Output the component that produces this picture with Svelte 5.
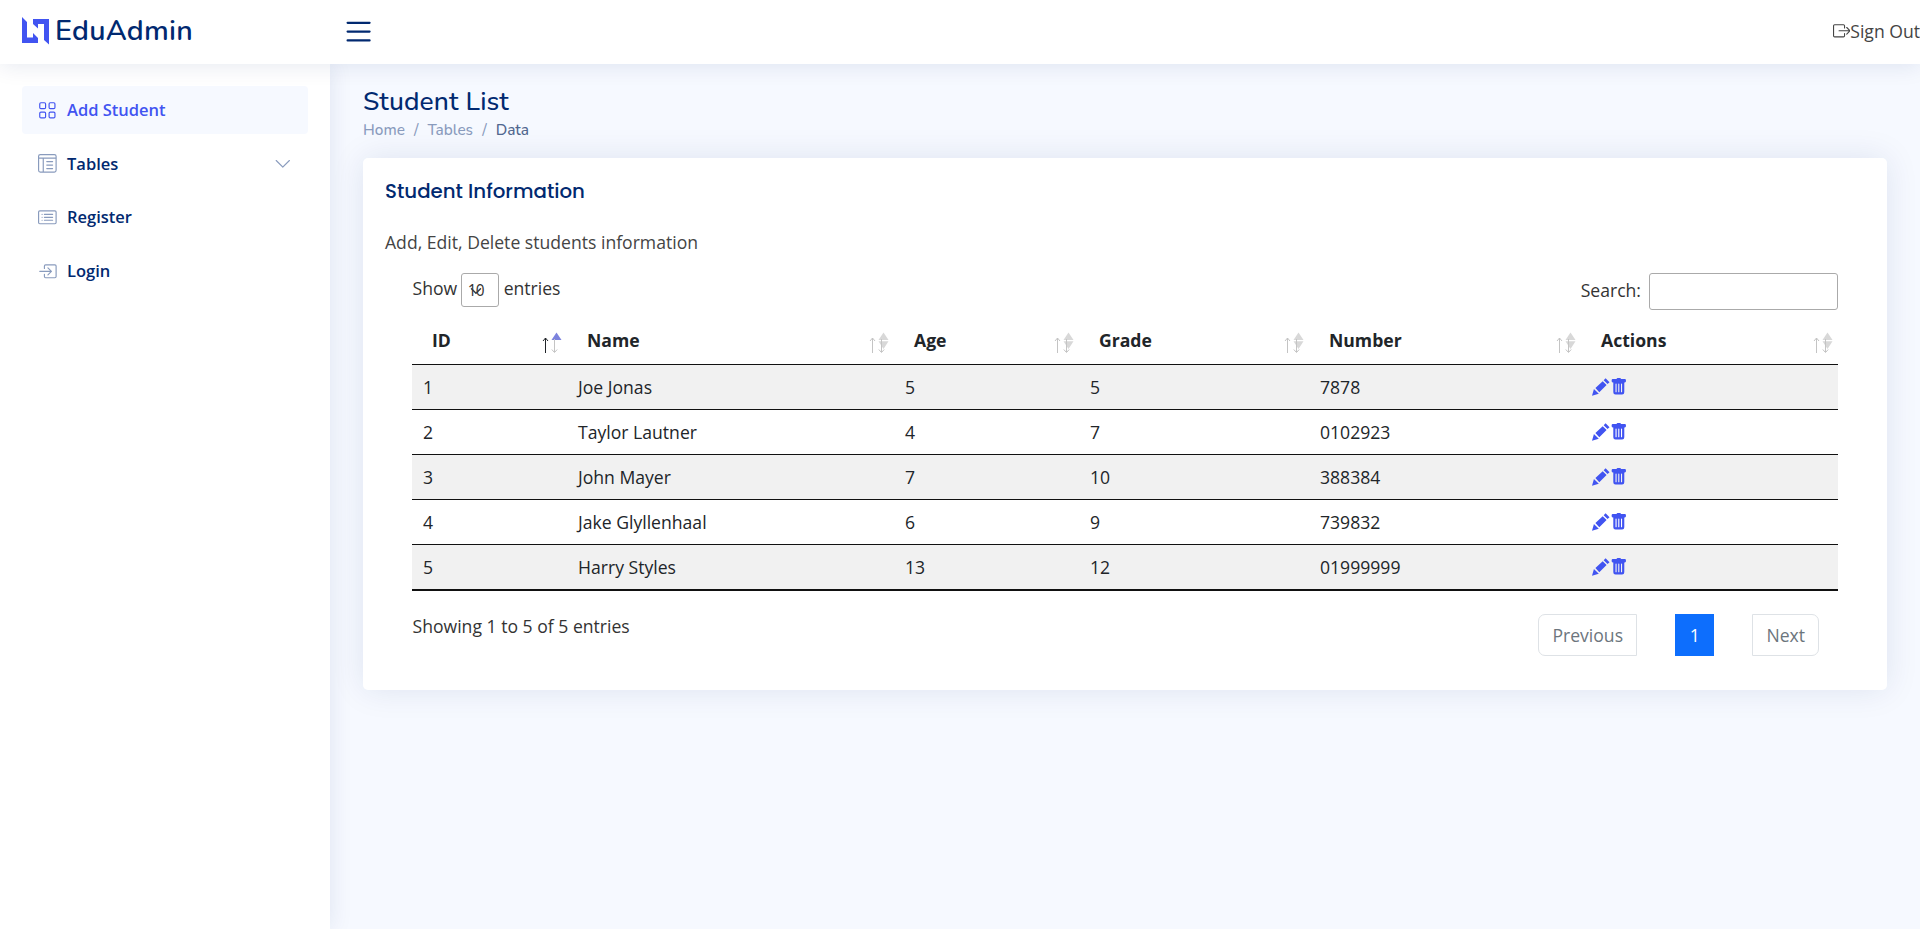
<script>
  const rows = [
    ['1', 'Joe Jonas', '5', '5', '7878'],
    ['2', 'Taylor Lautner', '4', '7', '0102923'],
    ['3', 'John Mayer', '7', '10', '388384'],
    ['4', 'Jake Glyllenhaal', '6', '9', '739832'],
    ['5', 'Harry Styles', '13', '12', '01999999']
  ];
  const columns = ['ID', 'Name', 'Age', 'Grade', 'Number', 'Actions'];
  const widths = [155, 327, 185, 230, 272, 257];
</script>

<header>
  <div class="brand">
    <svg class="logo" width="28" height="28" viewBox="0 0 28 28">
      <path d="M0 0 L5 5 V20.500 H11 L11 16 L16 21 V26 H0Z M27 27.500 L22 23 V7 H16 V11.500 L11 7 V2 H27Z" fill="#4154f1" />
    </svg>
    <span>EduAdmin</span>
  </div>
  <svg class="burger" width="35.2" height="35.2" viewBox="0 0 16 16" fill="#012970"><path fill-rule="evenodd" d="M2.500 12a.5.5 0 0 1 .5-.5h10a.5.5 0 0 1 0 1H3a.5.5 0 0 1-.5-.5zm0-4a.5.5 0 0 1 .5-.5h10a.5.5 0 0 1 0 1H3a.5.5 0 0 1-.5-.5zm0-4a.5.5 0 0 1 .5-.5h10a.5.5 0 0 1 0 1H3a.5.5 0 0 1-.5-.5z" /></svg>
  <a class="signout" href="#out">
    <svg width="17.6" height="17.6" viewBox="0 0 16 16" fill="currentColor"><path fill-rule="evenodd" d="M10 12.500a.5.5 0 0 1-.5.5h-8a.5.5 0 0 1-.5-.5v-9a.5.5 0 0 1 .5-.5h8a.5.5 0 0 1 .5.5v2a.5.5 0 0 0 1 0v-2A1.500 1.500 0 0 0 9.500 2h-8A1.500 1.500 0 0 0 0 3.500v9A1.500 1.500 0 0 0 1.500 14h8a1.500 1.500 0 0 0 1.500-1.500v-2a.5.5 0 0 0-1 0v2z" /><path fill-rule="evenodd" d="M15.854 8.354a.5.5 0 0 0 0-.708l-3-3a.5.5 0 0 0-.708.708L14.293 7.500H5.500a.5.5 0 0 0 0 1h8.793l-2.147 2.146a.5.5 0 0 0 .708.708l3-3z" /></svg><span>Sign Out</span>
  </a>
</header>

<div class="body">
  <aside>
    <a class="nav active" href="#add">
      <svg viewBox="0 0 16 16"><path d="M1 2.500A1.500 1.500 0 0 1 2.500 1h3A1.500 1.500 0 0 1 7 2.500v3A1.500 1.500 0 0 1 5.500 7h-3A1.500 1.500 0 0 1 1 5.500v-3zM2.500 2a.5.5 0 0 0-.5.5v3a.5.5 0 0 0 .5.5h3a.5.5 0 0 0 .5-.5v-3a.5.5 0 0 0-.5-.5h-3zm6.500.5A1.500 1.500 0 0 1 10.500 1h3A1.500 1.500 0 0 1 15 2.500v3A1.500 1.500 0 0 1 13.500 7h-3A1.500 1.500 0 0 1 9 5.500v-3zm1.500-.5a.5.5 0 0 0-.5.5v3a.5.5 0 0 0 .5.5h3a.5.5 0 0 0 .5-.5v-3a.5.5 0 0 0-.5-.5h-3zM1 10.500A1.500 1.500 0 0 1 2.500 9h3A1.500 1.500 0 0 1 7 10.500v3A1.500 1.500 0 0 1 5.500 15h-3A1.500 1.500 0 0 1 1 13.500v-3zm1.500-.5a.5.5 0 0 0-.5.5v3a.5.5 0 0 0 .5.5h3a.5.5 0 0 0 .5-.5v-3a.5.5 0 0 0-.5-.5h-3zm6.500.5A1.500 1.500 0 0 1 10.500 9h3a1.500 1.500 0 0 1 1.500 1.500v3a1.500 1.500 0 0 1-1.500 1.500h-3A1.500 1.500 0 0 1 9 13.500v-3zm1.500-.5a.5.5 0 0 0-.5.5v3a.5.5 0 0 0 .5.5h3a.5.5 0 0 0 .5-.5v-3a.5.5 0 0 0-.5-.5h-3z" /></svg>
      <span>Add Student</span>
    </a>
    <a class="nav" href="#tables">
      <svg class="line" viewBox="0 0 16 16"><rect x=".5" y=".5" width="15" height="15" rx="1.500" /><path d="M.5 3.500h15M4.500 3.500v12" /><path d="M7.500 6.500h5M7.500 9.500h5M7.500 12.500h5" stroke-linecap="round" /></svg>
      <span>Tables</span>
      <svg class="chev" viewBox="0 0 16 16"><path fill-rule="evenodd" d="M1.646 4.646a.5.5 0 0 1 .708 0L8 10.293l5.646-5.647a.5.5 0 0 1 .708.708l-6 6a.5.5 0 0 1-.708 0l-6-6a.5.5 0 0 1 0-.708z" /></svg>
    </a>
    <a class="nav" href="#register">
      <svg viewBox="0 0 16 16"><path d="M14.500 3a.5.5 0 0 1 .5.5v9a.5.5 0 0 1-.5.5h-13a.5.5 0 0 1-.5-.5v-9a.5.5 0 0 1 .5-.5h13zm-13-1A1.500 1.500 0 0 0 0 3.500v9A1.500 1.500 0 0 0 1.500 14h13a1.500 1.500 0 0 0 1.500-1.500v-9A1.500 1.500 0 0 0 14.500 2h-13z" /><path d="M5 8a.5.5 0 0 1 .5-.5h7a.5.5 0 0 1 0 1h-7A.5.5 0 0 1 5 8zm0-2.500a.5.5 0 0 1 .5-.5h7a.5.5 0 0 1 0 1h-7a.5.5 0 0 1-.5-.5zm0 5a.5.5 0 0 1 .5-.5h7a.5.5 0 0 1 0 1h-7a.5.5 0 0 1-.5-.5zm-1-5a.5.5 0 1 1-1 0 .5.5 0 0 1 1 0zM4 8a.5.5 0 1 1-1 0 .5.5 0 0 1 1 0zm0 2.500a.5.5 0 1 1-1 0 .5.5 0 0 1 1 0z" /></svg>
      <span>Register</span>
    </a>
    <a class="nav" href="#login">
      <svg viewBox="0 0 16 16"><path fill-rule="evenodd" d="M6 3.500a.5.5 0 0 1 .5-.5h8a.5.5 0 0 1 .5.5v9a.5.5 0 0 1-.5.5h-8a.5.5 0 0 1-.5-.5v-2a.5.5 0 0 0-1 0v2A1.500 1.500 0 0 0 6.500 14h8a1.500 1.500 0 0 0 1.500-1.500v-9A1.500 1.500 0 0 0 14.500 2h-8A1.500 1.500 0 0 0 5 3.500v2a.5.5 0 0 0 1 0v-2z" /><path fill-rule="evenodd" d="M11.854 8.354a.5.5 0 0 0 0-.708l-3-3a.5.5 0 1 0-.708.708L10.293 7.500H1.500a.5.5 0 0 0 0 1h8.793l-2.147 2.146a.5.5 0 0 0 .708.708l3-3z" /></svg>
      <span>Login</span>
    </a>
  </aside>

  <main>
    <h1>Student List</h1>
    <div class="crumbs"><span>Home</span><i>/</i><span>Tables</span><i>/</i><b>Data</b></div>
    <section class="card">
      <h2>Student Information</h2>
      <p>Add, Edit, Delete students information</p>
      <div class="wrap">
        <div class="tools">
          <div class="length">
            <span class="show">Show</span>
            <div class="select"><span>10</span><svg width="12" height="12" viewBox="0 0 16 16"><path fill="none" stroke="#343a40" stroke-linecap="round" stroke-linejoin="round" stroke-width="2" d="M2 5l6 6 6-6" /></svg></div>
            <span class="entries">entries</span>
          </div>
          <label><span>Search:</span><input type="text" /></label>
        </div>
        <table>
          <colgroup>{#each widths as w}<col style="width:{w}px" />{/each}</colgroup>
          <thead>
            <tr>
              {#each columns as c, i}
                <th class:sorted={i === 0}>
                  <div class="head">
                    <span>{c}</span>
                    <svg class="sort" width="20" height="22" viewBox="0 0 20 22">
                      <g class="up" fill="none" stroke="currentColor"><path d="M3.500 21V6M1 9l2.500-3L6 9" /></g>
                      <path class="tri" d="M9.500 8L14.500 0.500L19.500 8Z" />
                      {#if i > 0}<path class="tri" d="M9.500 9.300L14.500 17L19.500 9.300Z" />{/if}
                      <g class="down" fill="none" stroke="currentColor"><path d="M12.500 7V20M9.800 17.500l2.700 3l2.700-3" /></g>
                    </svg>
                  </div>
                </th>
              {/each}
            </tr>
          </thead>
          <tbody>
            {#each rows as r}
              <tr>
                {#each r as v}<td>{v}</td>{/each}
                <td>
                  <div class="acts">
                    <svg width="17.500" height="18" viewBox="0 0 18 18" fill="currentColor"><path d="M0 18l2-7 5 5z M3.500 10l7.500-7 4 4-7.500 7.500z M12 2l2-2 4 4-2 2z" /></svg>
                    <svg width="17.600" height="17.600" viewBox="0 0 16 16" fill="currentColor"><path d="M2.500 1a1 1 0 0 0-1 1v1a1 1 0 0 0 1 1H3v9a2 2 0 0 0 2 2h6a2 2 0 0 0 2-2V4h.5a1 1 0 0 0 1-1V2a1 1 0 0 0-1-1H10a1 1 0 0 0-1-1H7a1 1 0 0 0-1 1H2.500zm3 4a.5.5 0 0 1 .5.5v7a.5.5 0 0 1-1 0v-7a.5.5 0 0 1 .5-.5zM8 5a.5.5 0 0 1 .5.5v7a.5.5 0 0 1-1 0v-7A.5.5 0 0 1 8 5zm3 .5v7a.5.5 0 0 1-1 0v-7a.5.5 0 0 1 1 0z" /></svg>
                  </div>
                </td>
              </tr>
            {/each}
          </tbody>
        </table>
        <div class="foot">
          <span class="info">Showing 1 to 5 of 5 entries</span>
          <div class="pager"><span class="page prev">Previous</span><span class="page cur">1</span><span class="page next">Next</span></div>
        </div>
      </div>
    </section>
  </main>
</div>

<style>
  :global(body) { margin: 0; background: #f6f9ff; color: #444; font: 17.6px/26.4px "Open Sans", sans-serif; }
  :global(*) { box-sizing: border-box; }
  a { text-decoration: none; color: inherit; }
  header { position: relative; z-index: 2; height: 64px; display: flex; align-items: center; background: #fff; box-shadow: 0 2px 22px rgba(1, 41, 112, .1); }
  .brand { width: 341px; padding: 0 0 2px 22px; display: flex; align-items: center; gap: 5px; font: 600 28.6px/32px Nunito, "Nunito Sans", "Open Sans", sans-serif; color: #012970; }
  .brand span { letter-spacing: .25px; }
  .signout { margin-left: auto; padding-bottom: 2px; display: flex; align-items: center; white-space: nowrap; }
  .body { display: flex; min-height: 865px; }
  aside { width: 330px; flex: none; padding: 22px; background: #fff; box-shadow: 0 0 22px rgba(1, 41, 112, .1); display: flex; flex-direction: column; gap: 5.800px; }
  .nav { height: 48px; padding: 0 16px; border-radius: 4px; display: flex; align-items: center; color: #012970; font-weight: 600; font-size: 16.500px; }
  .nav svg { width: 18.700px; height: 18.700px; margin-right: 10.300px; fill: #899bbd; }
  .nav svg.line { fill: none; stroke: #899bbd; }
  .nav .chev { width: 17.600px; height: 17.600px; margin: 0 0 0 auto; }
  .nav.active { background: #f6f9ff; color: #4154f1; }
  .nav.active svg { fill: #4154f1; }
  main { flex: 1; padding: 22px 33px; }
  h1 { margin: 0; font: 500 26.4px/31px Nunito, "Open Sans", sans-serif; letter-spacing: .12px; color: #012970; }
  .crumbs { display: flex; padding-top: 1px; font: 500 15.4px/23px Nunito, "Open Sans", sans-serif; color: #899bbd; }
  .crumbs i { font-style: normal; width: 22.600px; text-align: center; }
  .crumbs b { font-weight: 500; color: #51678f; }
  .card { margin-top: 17px; height: 532px; padding: 21px 22px; background: #fff; border-radius: 5px; box-shadow: 0 0 33px rgba(1, 41, 112, .1); }
  h2 { margin: 0; font: 500 19.8px/24px Poppins, sans-serif; color: #012970; }
  p { margin: 26px 0 0; }
  .wrap { padding: 18px 27px 0; color: #333; }
  .tools { display: flex; justify-content: space-between; height: 47px; }
  .length { display: flex; align-items: flex-start; padding-left: .5px; }
  .show, .entries { padding-top: 2px; }
  .select { position: relative; width: 38px; height: 34px; margin: 0 5px 0 3.500px; border: 1px solid #aaa; border-radius: 3px; font-size: 15.400px; letter-spacing: -.8px; padding: 4px 0 0 6px; }
  .select svg { position: absolute; left: 8px; top: 11px; }
  label { display: flex; }
  label span { padding: 4px 8px 0 0; }
  input { width: 189px; height: 37px; border: 1px solid #aaa; border-radius: 3px; background: transparent; }
  table { width: 1426px; table-layout: fixed; border-collapse: separate; border-spacing: 0; color: #212529; border-bottom: 1px solid #111; }
  th { height: 45px; padding: 0 5px 0 20px; text-align: left; border-bottom: 1px solid #111; font-weight: 700; vertical-align: top; }
  .head { display: flex; justify-content: space-between; padding-top: 7px; }
  .sort { margin-top: 5px; color: #c4c4c4; }
  .tri { fill: #d8d8d8; }
  .sorted .up { color: #212529; }
  .sorted .tri { fill: #7c82dd; }
  td { height: 45px; padding: 0 11px; border-bottom: 1px solid #111; }
  tbody tr:nth-child(odd) { background: #f1f1f1; }
  .acts { display: flex; padding-left: .3px; color: #4154f1; }
  .foot { display: flex; justify-content: space-between; padding-top: 23px; }
  .foot .info { line-height: 24px; padding-left: .5px; }
  .pager { display: flex; gap: 38px; margin-right: 19px; }
  .page { height: 42px; line-height: 40px; border: 1px solid #dee2e6; padding: 0 13px; color: #6c757d; }
  .prev { width: 99px; border-radius: 7px 0 0 7px; }
  .next { border-radius: 0 7px 7px 0; }
  .cur { width: 39px; text-align: center; background: #0d6efd; border-color: #0d6efd; color: #fff; }
</style>
